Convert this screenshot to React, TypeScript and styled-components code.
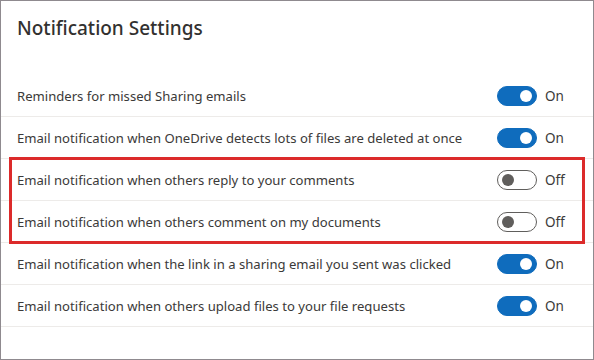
import React from "react";
import styled, { createGlobalStyle } from "styled-components";

const Global = createGlobalStyle`
  html, body { margin: 0; padding: 0; background: #ffffff; }
  body { font-family: "Noto Sans", "Open Sans", sans-serif; color: #323130; }
`;

const Panel = styled.div`
  box-sizing: border-box;
  width: 594px;
  height: 360px;
  border: 1px solid #8f8a8f;
  background: #ffffff;
  display: flex;
  flex-direction: column;
`;

const Title = styled.h1`
  margin: 0;
  padding: 14px 0 0 16px;
  height: 60px;
  box-sizing: border-box;
  font-size: 19px;
  font-weight: 500;
  color: #323130;
  letter-spacing: 0;
`;

const List = styled.div`
  margin-top: 14px;
  display: flex;
  flex-direction: column;
`;

const Group = styled.div<{ $highlight?: boolean }>`
  position: relative;
  display: flex;
  flex-direction: column;
  &::after {
    content: "";
    display: ${(p) => (p.$highlight ? "block" : "none")};
    position: absolute;
    left: 8px;
    right: 8px;
    top: -2px;
    bottom: -1px;
    border: 3px solid #dc2a2a;
    pointer-events: none;
  }
`;

const Row = styled.div`
  height: 42px;
  box-sizing: border-box;
  border-bottom: 1px solid #edebe9;
  display: flex;
  align-items: center;
  padding: 0 18px 0 16px;
`;

const Label = styled.span`
  flex: 1;
  font-size: 13.1px;
  color: #3b3a39;
  white-space: nowrap;
`;

const Control = styled.div`
  display: flex;
  align-items: center;
  gap: 8px;
  width: 78px;
`;

const Track = styled.span<{ $on: boolean }>`
  box-sizing: border-box;
  width: 40px;
  height: 20px;
  border-radius: 10px;
  display: flex;
  align-items: center;
  padding: 0 4px;
  justify-content: ${(p) => (p.$on ? "flex-end" : "flex-start")};
  background: ${(p) => (p.$on ? "#0f6cbd" : "#ffffff")};
  border: 1px solid ${(p) => (p.$on ? "#0f6cbd" : "#605e5c")};
`;

const Knob = styled.span<{ $on: boolean }>`
  width: 12px;
  height: 12px;
  border-radius: 50%;
  background: ${(p) => (p.$on ? "#ffffff" : "#605e5c")};
`;

const State = styled.span`
  font-size: 13.5px;
  color: #3b3a39;
`;

type Item = { text: string; on: boolean };

const Setting = ({ text, on }: Item) => (
  <Row>
    <Label>{text}</Label>
    <Control>
      <Track $on={on}>
        <Knob $on={on} />
      </Track>
      <State>{on ? "On" : "Off"}</State>
    </Control>
  </Row>
);

const before: Item[] = [
  { text: "Reminders for missed Sharing emails", on: true },
  { text: "Email notification when OneDrive detects lots of files are deleted at once", on: true },
];
const highlighted: Item[] = [
  { text: "Email notification when others reply to your comments", on: false },
  { text: "Email notification when others comment on my documents", on: false },
];
const after: Item[] = [
  { text: "Email notification when the link in a sharing email you sent was clicked", on: true },
  { text: "Email notification when others upload files to your file requests", on: true },
];

export default function App() {
  return (
    <>
      <Global />
      <Panel>
        <Title>Notification Settings</Title>
        <List>
          <Group>
            {before.map((s) => (
              <Setting key={s.text} {...s} />
            ))}
          </Group>
          <Group $highlight>
            {highlighted.map((s) => (
              <Setting key={s.text} {...s} />
            ))}
          </Group>
          <Group>
            {after.map((s) => (
              <Setting key={s.text} {...s} />
            ))}
          </Group>
        </List>
      </Panel>
    </>
  );
}
